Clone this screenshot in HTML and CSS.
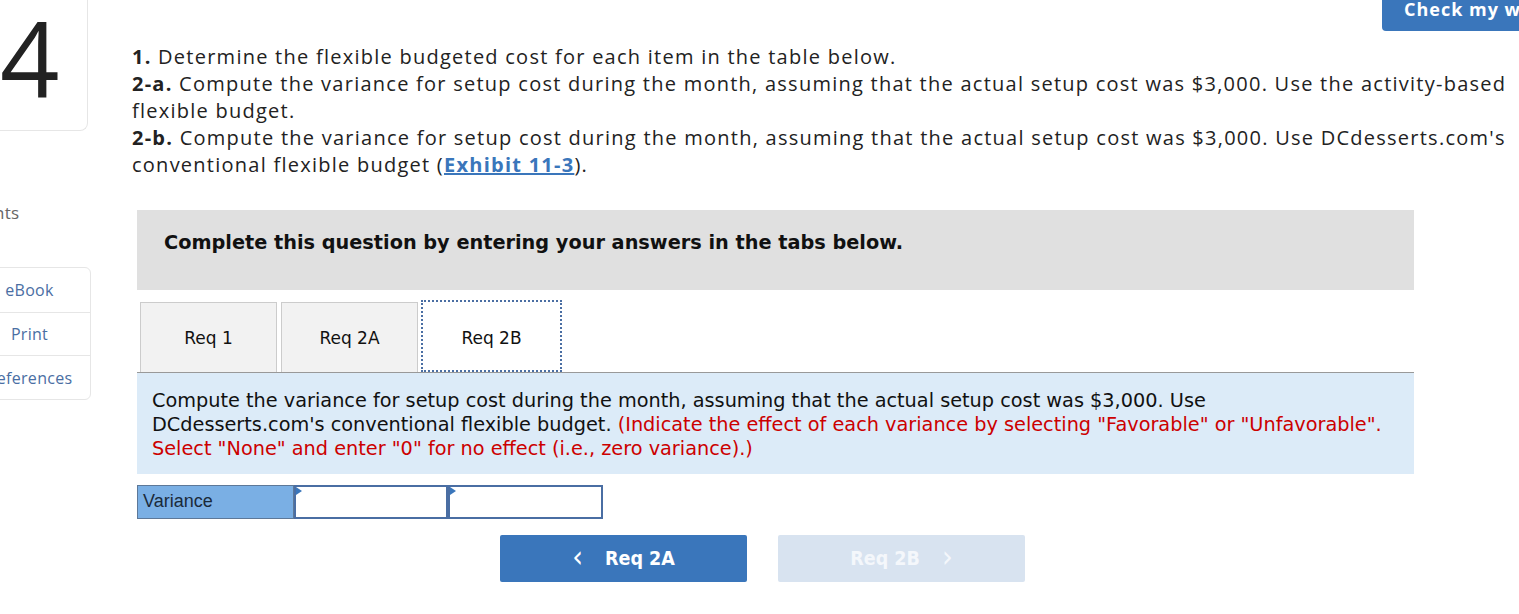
FILE: index.html
```html
<!DOCTYPE html>
<html>
<head>
<meta charset="utf-8">
<link rel="stylesheet" href="styles.css">
</head>
<body>
<div class="page">
  <aside class="side">
    <div class="qcard"><span class="qnum">4</span></div>
    <div class="pts">nts</div>
    <div class="tools">
      <div class="tool">eBook</div>
      <div class="tool">Print</div>
      <div class="tool">References</div>
    </div>
  </aside>
  <main class="main">
    <div class="prompt">
      <p><b>1.</b> Determine the flexible budgeted cost for each item in the table below.</p>
      <p><b>2-a.</b> Compute the variance for setup cost during the month, assuming that the actual setup cost was $3,000. Use the activity-based flexible budget.</p>
      <p><b>2-b.</b> Compute the variance for setup cost during the month, assuming that the actual setup cost was $3,000. Use DCdesserts.com's conventional flexible budget (<a class="exh" href="#">Exhibit 11-3</a>).</p>
    </div>
    <div class="banner">Complete this question by entering your answers in the tabs below.</div>
    <div class="tabs">
      <div class="tab">Req 1</div>
      <div class="tab">Req 2A</div>
      <div class="tab active">Req 2B</div>
    </div>
    <div class="instr">Compute the variance for setup cost during the month, assuming that the actual setup cost was $3,000. Use DCdesserts.com's conventional flexible budget. <span class="red">(Indicate the effect of each variance by selecting "Favorable" or "Unfavorable". Select "None" and enter "0" for no effect (i.e., zero variance).)</span></div>
    <div class="vtable">
      <div class="vlabel">Variance</div>
      <div class="vcell"></div>
      <div class="vcell"></div>
    </div>
    <div class="nav">
      <div class="btn prev"><span class="chev">&lsaquo;</span>Req 2A</div>
      <div class="btn next">Req 2B<span class="chev">&rsaquo;</span></div>
    </div>
  </main>
  <div class="check">Check my work</div>
</div>
</body>
</html>
```
FILE: styles.css
```css
html, body { margin: 0; padding: 0; background: #fff; }
body { width: 1519px; height: 614px; overflow: hidden; font-family: "Open Sans", sans-serif; color: #222; }
.page { position: relative; display: flex; height: 614px; }
.side { width: 90px; flex: none; }
.qcard {
  width: 120px; height: 131px; box-sizing: border-box; margin-left: -32px;
  border: 1px solid #e6e6e6; border-top: none; border-radius: 0 0 8px 8px;
  display: flex; align-items: flex-start; justify-content: flex-start;
}
.qnum {
  font-family: "Open Sans", sans-serif; font-size: 104px; font-weight: 400; color: #222;
  line-height: 1; margin: 5px 0 0 31px;
}
.pts { margin-top: 70px; font-size: 17px; color: #666; margin-left: -6px; height: 20px; letter-spacing: 0.3px; }
.tools { margin-top: 46px; margin-left: -32px; width: 121px; border: 1px solid #e6e6e6; border-radius: 0 6px 6px 0; }
.tool { height: 44px; display: flex; align-items: center; justify-content: center; color: #4a6ea3; font-size: 16px; border-bottom: 1px solid #e6e6e6; letter-spacing: 0.3px; }
.tool:nth-child(2) { height: 42px; }
.tool:nth-child(3) { border-bottom: none; height: 43px; }
.main { margin-left: 42px; width: 1382px; }
.prompt { padding-top: 43px; font-size: 20px; line-height: 27px; color: #222; letter-spacing: 1.25px; }
.prompt p { margin: 0; }
.prompt b { font-weight: 700; }
.exh { color: #3a76bb; font-weight: 700; text-decoration: underline; }
.banner {
  margin: 32px 0 0 5px; width: 1277px; height: 80px; box-sizing: border-box;
  background: #e0e0e0; padding: 21px 0 0 27px;
  font-family: Tahoma, "DejaVu Sans", sans-serif; font-weight: 700; font-size: 19.3px; color: #111;
}
.tabs { display: flex; margin: 12px 0 0 5px; width: 1277px; border-bottom: 1px solid #999; height: 70px; }
.tab {
  width: 137px; height: 70px; box-sizing: border-box; margin-left: 3px;
  background: #f2f2f2; border: 1px solid #ccc; border-bottom: none;
  display: flex; align-items: center; justify-content: center;
  font-family: Verdana, "DejaVu Sans", sans-serif; font-size: 17px; color: #111;
}
.tab + .tab { margin-left: 4px; }
.tab.active { background: #fff; border: 2px dotted #4a6ea3; width: 141px; height: 72px; margin-top: -2px; margin-left: 3px; margin-bottom: -1px; padding-top: 4px; }
.instr {
  margin-left: 5px; width: 1277px; height: 101px; box-sizing: border-box;
  background: #dcebf8; padding: 16px 32px 0 15px;
  font-family: Verdana, "DejaVu Sans", sans-serif; font-size: 19.3px; line-height: 24px; color: #111;
}
.red { color: #c00; }
.vtable { display: flex; margin: 11px 0 0 5px; height: 34px; }
.vlabel {
  width: 157px; box-sizing: border-box; background: #7aafe4; border: 1px solid #5d7898;
  font-family: "Liberation Sans", Arial, sans-serif; font-size: 18px; line-height: 30px; padding-left: 5px; color: #1a2a3a;
}
.vcell { position: relative; width: 154px; box-sizing: border-box; border: 2px solid #4a6ea3; background: #fff; }
.vcell + .vcell { width: 155px; }
.vcell::before {
  content: ""; position: absolute; left: 0; top: 0;
  border-left: 6px solid #3a76bb; border-top: 4px solid transparent; border-bottom: 4px solid transparent;
}
.nav { display: flex; gap: 31px; margin: 16px 0 0 368px; }
.btn {
  width: 247px; height: 47px; border-radius: 2px; display: flex; align-items: center; justify-content: center;
  font-family: Tahoma, "DejaVu Sans", sans-serif; font-stretch: condensed; font-weight: 700; font-size: 19.5px; color: #fff;
}
.prev { background: #3a76bb; }
.next { background: #d8e3f0; color: #f4f7fb; }
.chev { font-size: 30px; font-weight: 400; line-height: 1; margin: -4px 22px 0 0; }
.next .chev { margin: -4px 0 0 22px; }
.check {
  position: absolute; left: 1382px; top: -6px; width: 160px; height: 37px; box-sizing: border-box;
  background: #3a76bb; border-radius: 4px; color: #fff; font-weight: 700; font-size: 18px;
  padding: 3px 0 0 22px; white-space: nowrap; overflow: hidden; letter-spacing: 1px;
}
```
